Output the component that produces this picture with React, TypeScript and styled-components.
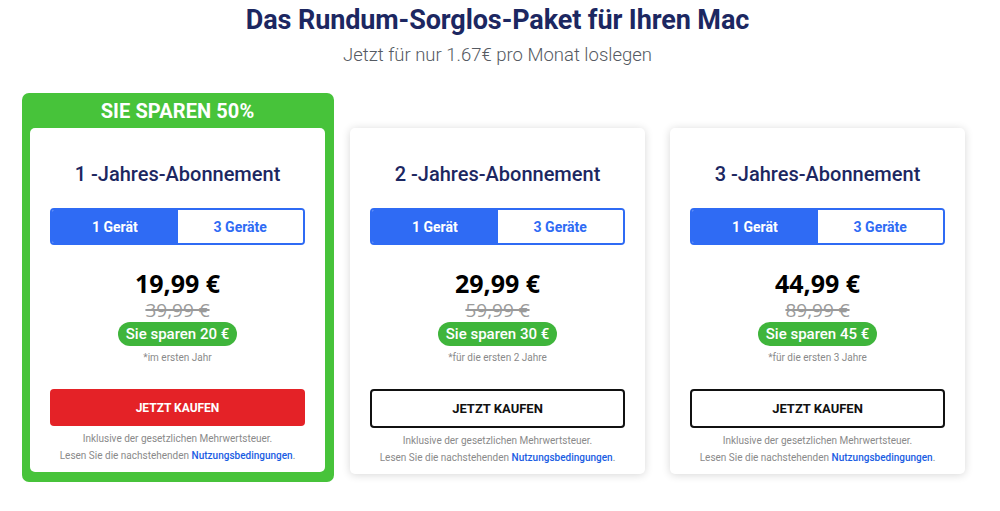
import React from "react";
import styled, { createGlobalStyle } from "styled-components";

const GlobalStyle = createGlobalStyle`
  html, body { margin: 0; padding: 0; background: #ffffff; }
  body { font-family: Roboto, "Noto Sans", Arial, sans-serif; -webkit-font-smoothing: antialiased; }
  * { box-sizing: border-box; }
`;

const Page = styled.div`
  width: 995px;
  height: 511px;
  overflow: hidden;
  display: flex;
  flex-direction: column;
  align-items: center;
`;

const Title = styled.h1`
  margin: 5px 0 0;
  font-size: 27px;
  line-height: 31px;
  font-weight: 700;
  color: #1c2761;
  letter-spacing: -0.1px;
`;

const Subtitle = styled.p`
  margin: 7px 0 0;
  font-size: 18.5px;
  line-height: 24px;
  font-weight: 300;
  color: #555a62;
`;

const Row = styled.div`
  align-self: stretch;
  display: flex;
  align-items: flex-start;
  padding-left: 22px;
  margin-top: 26px;
`;

const Highlight = styled.div`
  width: 312px;
  background: #47c33a;
  border-radius: 7px;
  padding: 0 9px 10px 8px;
  display: flex;
  flex-direction: column;
`;

const HighlightLabel = styled.div`
  height: 35px;
  display: flex;
  align-items: center;
  justify-content: center;
  color: #ffffff;
  font-size: 20px;
  font-weight: 700;
  letter-spacing: 0.1px;
`;

const Card = styled.div<{ $shadow?: boolean; $gap?: number }>`
  width: 295px;
  background: #ffffff;
  border-radius: 5px;
  padding: 34px 20px 8px;
  display: flex;
  flex-direction: column;
  align-items: center;
  margin-left: ${(p) => p.$gap ?? 0}px;
  margin-top: ${(p) => (p.$shadow ? 35 : 0)}px;
  box-shadow: ${(p) => (p.$shadow ? "0 1px 8px rgba(0,0,0,0.16)" : "none")};
`;

const PlanName = styled.h2`
  margin: 0;
  font-size: 20px;
  line-height: 24px;
  font-weight: 500;
  color: #1c2761;
`;

const Toggle = styled.div`
  margin-top: 22px;
  width: 255px;
  height: 37px;
  display: grid;
  grid-template-columns: 1fr 1fr;
  border: 2px solid #2f6bf4;
  border-radius: 4px;
  overflow: hidden;
`;

const ToggleOption = styled.div<{ $active?: boolean }>`
  display: flex;
  align-items: center;
  justify-content: center;
  font-size: 14px;
  font-weight: 700;
  background: ${(p) => (p.$active ? "#2f6bf4" : "#ffffff")};
  color: ${(p) => (p.$active ? "#ffffff" : "#2f6bf4")};
`;

const Price = styled.div`
  margin-top: 24px;
  font-family: "Open Sans", Roboto, sans-serif;
  font-size: 25px;
  line-height: 28px;
  font-weight: 700;
  color: #000000;
`;

const OldPrice = styled.div`
  margin-top: 2px;
  font-family: "Open Sans", Roboto, sans-serif;
  font-size: 19px;
  line-height: 22px;
  color: #9a9a9a;
  text-decoration: line-through;
  text-decoration-thickness: 1.5px;
`;

const Savings = styled.div`
  margin-top: 1px;
  height: 24px;
  padding: 0 8px;
  border-radius: 12px;
  background: #3fb53b;
  color: #ffffff;
  font-size: 15px;
  font-weight: 500;
  display: flex;
  align-items: center;
`;

const Note = styled.div`
  margin-top: 5px;
  font-size: 10px;
  line-height: 14px;
  color: #8a8a8a;
`;

const BuyButton = styled.button<{ $primary?: boolean }>`
  margin-top: 24px;
  width: 255px;
  height: ${(p) => (p.$primary ? 37 : 39)}px;
  border-radius: 4px;
  border: ${(p) => (p.$primary ? "none" : "2px solid #111111")};
  background: ${(p) => (p.$primary ? "#e42227" : "#ffffff")};
  color: ${(p) => (p.$primary ? "#ffffff" : "#111111")};
  font-family: Roboto, sans-serif;
  font-size: ${(p) => (p.$primary ? 12 : 13)}px;
  font-weight: 700;
  cursor: pointer;
`;

const Fine = styled.div`
  margin-top: 4px;
  text-align: center;
  font-size: 10px;
  line-height: 17px;
  color: #8a8a8a;
`;

const Link = styled.a`
  color: #1a5de3;
  font-weight: 500;
  text-decoration: none;
`;

type Plan = {
  years: number;
  price: string;
  old: string;
  save: string;
  note: string;
};

const plans: Plan[] = [
  { years: 1, price: "19,99 €", old: "39,99 €", save: "Sie sparen 20 €", note: "*im ersten Jahr" },
  { years: 2, price: "29,99 €", old: "59,99 €", save: "Sie sparen 30 €", note: "*für die ersten 2 Jahre" },
  { years: 3, price: "44,99 €", old: "89,99 €", save: "Sie sparen 45 €", note: "*für die ersten 3 Jahre" },
];

function PlanCard({ plan, featured, gap }: { plan: Plan; featured?: boolean; gap?: number }) {
  return (
    <Card $shadow={!featured} $gap={gap}>
      <PlanName>{plan.years} -Jahres-Abonnement</PlanName>
      <Toggle>
        <ToggleOption $active>1 Gerät</ToggleOption>
        <ToggleOption>3 Geräte</ToggleOption>
      </Toggle>
      <Price>{plan.price}</Price>
      <OldPrice>{plan.old}</OldPrice>
      <Savings>{plan.save}</Savings>
      <Note>{plan.note}</Note>
      <BuyButton $primary={featured}>JETZT KAUFEN</BuyButton>
      <Fine>
        Inklusive der gesetzlichen Mehrwertsteuer.
        <br />
        Lesen Sie die nachstehenden <Link href="#">Nutzungsbedingungen</Link>.
      </Fine>
    </Card>
  );
}

export default function App() {
  return (
    <>
      <GlobalStyle />
      <Page>
        <Title>Das Rundum-Sorglos-Paket für Ihren Mac</Title>
        <Subtitle>Jetzt für nur 1.67€ pro Monat loslegen</Subtitle>
        <Row>
          <Highlight>
            <HighlightLabel>SIE SPAREN 50%</HighlightLabel>
            <PlanCard plan={plans[0]} featured />
          </Highlight>
          <PlanCard plan={plans[1]} gap={16} />
          <PlanCard plan={plans[2]} gap={25} />
        </Row>
      </Page>
    </>
  );
}
